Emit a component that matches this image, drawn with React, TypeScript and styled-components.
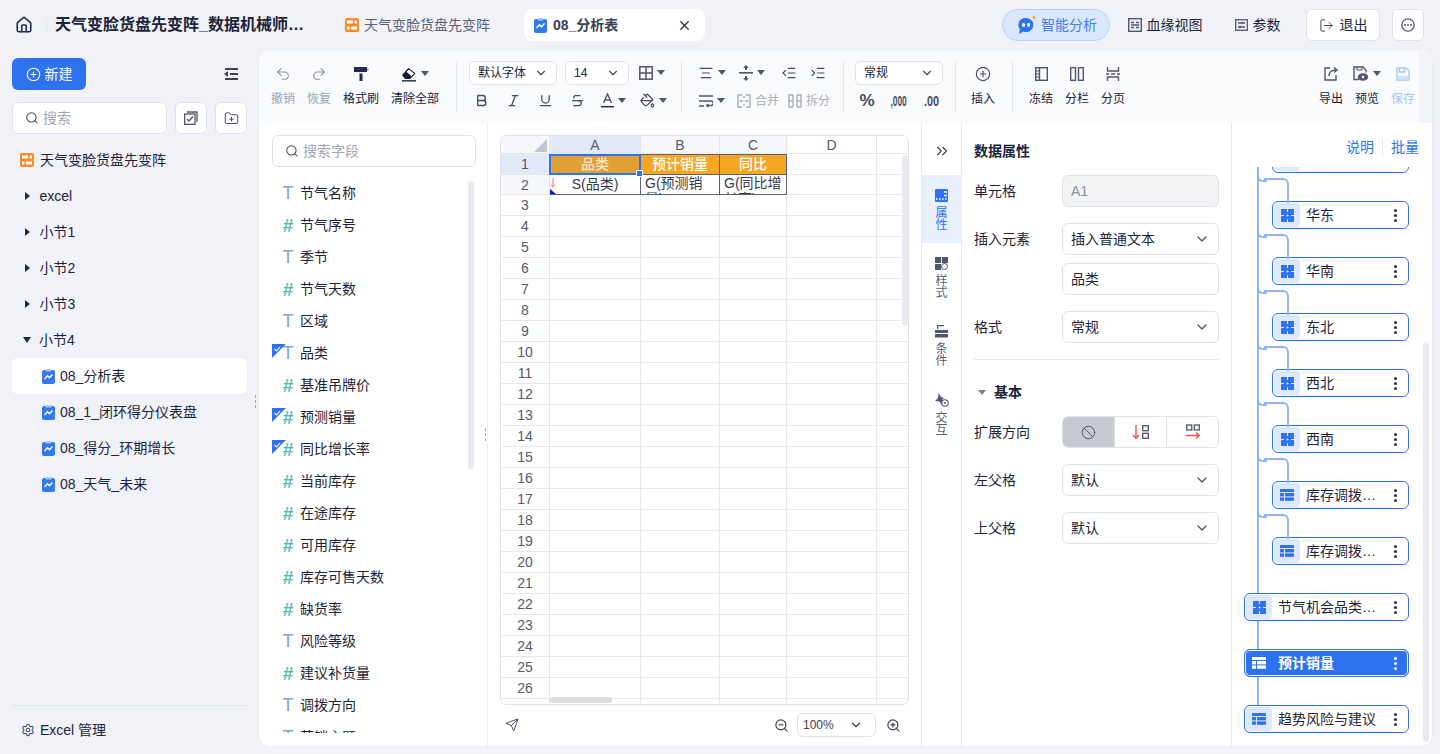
import * as React from "react";
import styled, { createGlobalStyle } from "styled-components";
import {
  AlignCenter,
  Ban,
  Bold,
  ChevronDown,
  ChevronsRight,
  CirclePlus,
  FolderPlus,
  Home,
  IndentDecrease,
  IndentIncrease,
  Italic,
  LogOut,
  PaintBucket,
  Redo2,
  Search,
  Send,
  Settings,
  Strikethrough,
  Underline,
  Undo2,
  X,
  ZoomIn,
  ZoomOut,
} from "lucide-react";

const FONT = `"Liberation Sans", "Noto Sans CJK SC", sans-serif`;
const INK = "#1d2438";
const ICON = "#454b60";
const BLUE = "#2f72f0";
const LINE = "#dfe2ea";

const GlobalStyle = createGlobalStyle`
  html, body { margin: 0; padding: 0; height: 100%; overflow: hidden; }
  body { background: #f0f2f8; font-family: ${FONT}; color: ${INK}; font-size: 14px; line-height: 20px; }
  * { box-sizing: border-box; }
`;

const Page = styled.div`
  width: 1440px;
  height: 754px;
  display: flex;
  flex-direction: column;
`;

/* ---------- header ---------- */
const Header = styled.header`
  height: 50px;
  flex: none;
  display: flex;
  align-items: center;
  padding: 0 16px 0 15px;
`;
const HomeWrap = styled.div`
  width: 32px;
  display: flex;
  color: #26304a;
  border-right: 1px solid #e6e8f0;
  height: 16px;
  align-items: center;
`;
const DocTitle = styled.div`
  width: 254px;
  margin-left: 8px;
  font-size: 16px;
  font-weight: 700;
  white-space: nowrap;
  overflow: hidden;
  text-overflow: ellipsis;
`;
const TabPlain = styled.div`
  margin-left: 36px;
  display: flex;
  align-items: center;
  gap: 5px;
  color: #5b6175;
  white-space: nowrap;
`;
const TabActive = styled.div`
  margin-left: 34px;
  width: 181px;
  height: 32px;
  background: #fff;
  border-radius: 8px;
  padding: 0 13px 0 10px;
  display: flex;
  align-items: center;
  gap: 6px;
  font-weight: 600;
  color: #3a4052;
  white-space: nowrap;
  span { flex: 1; }
`;
const HeaderRight = styled.div`
  margin-left: auto;
  display: flex;
  align-items: center;
`;
const AiPill = styled.div`
  width: 108px;
  height: 32px;
  border-radius: 16px;
  background: #d9e7ff;
  border: 1px solid #bcd3fb;
  color: #3f7ff0;
  display: flex;
  align-items: center;
  padding-left: 14px;
  gap: 4px;
`;
const HeaderLink = styled.div<{ $w: number }>`
  width: ${(p) => p.$w}px;
  display: flex;
  align-items: center;
  justify-content: center;
  gap: 5px;
  color: ${INK};
`;
const HeaderButton = styled.div<{ $w: number; $ml: number }>`
  width: ${(p) => p.$w}px;
  margin-left: ${(p) => p.$ml}px;
  height: 32px;
  background: #fff;
  border: 1px solid ${LINE};
  border-radius: 6px;
  display: flex;
  align-items: center;
  justify-content: center;
  gap: 6px;
  color: ${INK};
`;

/* ---------- body ---------- */
const Body = styled.div`
  flex: 1;
  min-height: 0;
  display: flex;
  padding-bottom: 8px;
`;

const Sidebar = styled.aside`
  width: 259px;
  flex: none;
  padding: 8px 12px 0;
  display: flex;
  flex-direction: column;
  position: relative;
`;
const SideTop = styled.div`
  display: flex;
  justify-content: space-between;
  align-items: center;
  padding-right: 9px;
`;
const NewButton = styled.div`
  width: 74px;
  height: 32px;
  background: ${BLUE};
  color: #fff;
  border-radius: 6px;
  display: flex;
  align-items: center;
  justify-content: center;
  gap: 4px;
`;
const SearchRow = styled.div`
  margin-top: 12px;
  display: flex;
  gap: 8px;
`;
const SearchBox = styled.div`
  flex: 1;
  height: 32px;
  background: #fff;
  border: 1px solid ${LINE};
  border-radius: 6px;
  display: flex;
  align-items: center;
  padding-left: 12px;
  gap: 4px;
  color: #a3a7b4;
  svg { color: ${ICON}; }
`;
const SquareButton = styled.div`
  width: 32px;
  height: 32px;
  background: #fff;
  border: 1px solid ${LINE};
  border-radius: 6px;
  display: flex;
  align-items: center;
  justify-content: center;
  color: ${ICON};
`;
const Tree = styled.div`
  margin-top: 8px;
  flex: 1;
`;
const TreeRow = styled.div<{ $active?: boolean; $indent: number; $gap?: number }>`
  height: 36px;
  display: flex;
  align-items: center;
  gap: ${(p) => p.$gap ?? 5}px;
  padding-left: ${(p) => p.$indent}px;
  border-radius: 6px;
  white-space: nowrap;
  background: ${(p) => (p.$active ? "#fff" : "transparent")};
`;
const Arrow = styled.span<{ $open?: boolean }>`
  width: 0;
  height: 0;
  ${(p) =>
    p.$open
      ? `border-left: 4.5px solid transparent; border-right: 4.5px solid transparent; border-top: 6px solid #232a3e; margin-left: -2px; margin-right: 3px;`
      : `border-top: 4.5px solid transparent; border-bottom: 4.5px solid transparent; border-left: 5.5px solid #232a3e; margin-right: 4.5px;`}
`;
const SideFooter = styled.div`
  height: 49px;
  border-top: 1px solid #e4e6ee;
  margin-bottom: -8px;
  display: flex;
  align-items: center;
  gap: 5px;
  padding-left: 9px;
  svg { color: ${ICON}; }
`;
const Grip = styled.div<{ $left: number; $top: number }>`
  position: absolute;
  left: ${(p) => p.$left}px;
  top: ${(p) => p.$top}px;
  width: 4px;
  height: 14px;
  background-image: radial-gradient(#a5a9b5 1px, transparent 1px);
  background-size: 3px 5px;
`;

const Main = styled.main`
  width: 1173px;
  flex: none;
  background: #fff;
  border-radius: 10px;
  overflow: hidden;
  display: flex;
  flex-direction: column;
  box-shadow: 0 0 2px rgba(60, 70, 110, 0.08);
`;

/* ---------- toolbar ---------- */
const Toolbar = styled.div`
  height: 73px;
  flex: none;
  background: linear-gradient(to right, #f9fafc 1160px, #f4f5f9 1160px);
  display: flex;
  align-items: center;
  padding: 0 17px 0 12px;
  font-size: 12px;
  line-height: 14px;
`;
const ToolGroup = styled.div<{ $gap?: number }>`
  display: flex;
  gap: ${(p) => p.$gap ?? 12}px;
`;
const ToolButton = styled.div<{ $w?: number; $dim?: boolean; $save?: boolean }>`
  width: ${(p) => (p.$w ? `${p.$w}px` : "auto")};
  height: 52px;
  padding-top: 1px;
  display: flex;
  flex-direction: column;
  align-items: center;
  gap: 6px;
  white-space: nowrap;
  color: ${(p) => (p.$save ? "#a9c6f8" : p.$dim ? "#a0a4af" : INK)};
  svg { color: ${(p) => (p.$save ? "#a9c6f8" : p.$dim ? "#8e929e" : ICON)}; }
`;
const ToolIcon = styled.div`
  height: 24px;
  display: flex;
  align-items: center;
  gap: 4px;
`;
const Sep = styled.div<{ $l: number; $r: number }>`
  width: 1px;
  height: 50px;
  background: #e3e5ec;
  margin: 0 ${(p) => p.$r}px 0 ${(p) => p.$l}px;
  flex: none;
`;
const Stack = styled.div<{ $w: number }>`
  width: ${(p) => p.$w}px;
  height: 52px;
  display: flex;
  flex-direction: column;
  justify-content: space-between;
`;
const ToolRow = styled.div<{ $gap?: number }>`
  height: 24px;
  display: flex;
  align-items: center;
  gap: ${(p) => p.$gap ?? 8}px;
`;
const MiniSelect = styled.div<{ $w: number }>`
  width: ${(p) => p.$w}px;
  height: 24px;
  background: #fff;
  border: 1px solid ${LINE};
  border-radius: 6px;
  display: flex;
  align-items: center;
  justify-content: space-between;
  padding: 0 8px;
  color: ${INK};
  svg { color: ${ICON}; }
`;
const Glyph = styled.div<{ $w?: number; $dim?: boolean }>`
  width: ${(p) => p.$w ?? 24}px;
  height: 24px;
  flex: none;
  display: flex;
  align-items: center;
  justify-content: center;
  gap: 4px;
  white-space: nowrap;
  color: ${(p) => (p.$dim ? "#a9adb8" : ICON)};
`;
const NumberGlyph = styled.span<{ $sx: number }>`
  font-size: 15px;
  font-weight: 700;
  color: #454b60;
  transform: scaleX(${(p) => p.$sx});
`;
const Percent = styled.span`
  font-size: 17px;
  font-weight: 700;
  color: #454b60;
`;
const Caret = styled.span`
  width: 0;
  height: 0;
  border-left: 4px solid transparent;
  border-right: 4px solid transparent;
  border-top: 5px solid #50566b;
`;
const ToolSpacer = styled.div`
  flex: 1;
`;

/* ---------- work area ---------- */
const Work = styled.div`
  flex: 1;
  min-height: 0;
  display: flex;
`;
const FieldsPanel = styled.section`
  width: 229px;
  flex: none;
  position: relative;
  border-right: 1px solid #eceef3;
  padding-top: 12px;
`;
const FieldSearch = styled(SearchBox)`
  width: 204px;
  flex: none;
  margin-left: 13px;
`;
const FieldList = styled.div`
  margin-top: 10px;
  height: 556px;
  overflow: hidden;
`;
const FieldRow = styled.div`
  height: 32px;
  display: flex;
  align-items: center;
  padding-left: 23px;
  gap: 6px;
  position: relative;
`;
const TypeMark = styled.span<{ $num: boolean }>`
  width: 12px;
  flex: none;
  text-align: center;
  font-size: ${(p) => (p.$num ? 19 : 18)}px;
  line-height: 1;
  font-weight: ${(p) => (p.$num ? 700 : 400)};
  font-family: "Liberation Sans", sans-serif;
  color: ${(p) => (p.$num ? "#55bdb0" : "#7f9fe6")};
`;
const CheckCorner = styled.svg`
  position: absolute;
  left: 13px;
  top: 7px;
`;
const VBar = styled.div<{ $l: number; $t: number; $h: number }>`
  position: absolute;
  left: ${(p) => p.$l}px;
  top: ${(p) => p.$t}px;
  width: 6px;
  height: ${(p) => p.$h}px;
  background: #eaebf0;
  border-radius: 3px;
`;

const SheetPanel = styled.section`
  width: 433px;
  flex: none;
  padding: 12px 12px 0 12px;
  display: flex;
  flex-direction: column;
`;
const SheetFrame = styled.div`
  width: 409px;
  height: 570px;
  border: 1px solid ${LINE};
  border-radius: 6px;
  overflow: hidden;
  position: relative;
`;
const SheetGrid = styled.div`
  display: grid;
  grid-template-columns: 49px 91px 79px 67px 90px 32px;
  grid-template-rows: 18px 21px 20px repeat(25, 21px);
`;
const HEAD_TONES = { sel: "#e1e9f7", used: "#f6f7fa", none: "#fff" };
const HeadCell = styled.div<{ $tone: keyof typeof HEAD_TONES }>`
  background: ${(p) => HEAD_TONES[p.$tone]};
  border-right: 1px solid #e5e7ec;
  border-bottom: 1px solid #e5e7ec;
  font-size: 14px;
  color: #555b6c;
  display: flex;
  align-items: center;
  justify-content: center;
  position: relative;
`;
const Corner = styled.span`
  position: absolute;
  right: 2px;
  bottom: 1px;
  width: 0;
  height: 0;
  border-left: 13px solid transparent;
  border-bottom: 13px solid #c3c6d2;
`;
const Cell = styled.div`
  border-right: 1px solid #e8e9ee;
  border-bottom: 1px solid #e8e9ee;
`;
const TitleCell = styled.div<{ $fill: string; $sel?: boolean }>`
  background: ${(p) => p.$fill};
  color: ${(p) => (p.$sel ? "#f6e6c8" : "#fff")};
  border: 1px solid #5c6178;
  border-left-width: ${(p) => (p.$sel ? 1 : 0)}px;
  font-weight: 500;
  text-align: center;
  line-height: 19px;
  position: relative;
  margin-left: ${(p) => (p.$sel ? -1 : 0)}px;
`;
const Selection = styled.span`
  position: absolute;
  inset: -1px;
  border: 2px solid ${BLUE};
  z-index: 2;
  &::after {
    content: "";
    position: absolute;
    right: -4px;
    bottom: -4px;
    width: 5px;
    height: 5px;
    background: ${BLUE};
    border: 1px solid #fff;
  }
`;
const DataCell = styled.div<{ $center?: boolean }>`
  border-right: 1px solid #5c6178;
  border-bottom: 1px solid #5c6178;
  line-height: ${(p) => (p.$center ? 19 : 16)}px;
  overflow: hidden;
  text-align: ${(p) => (p.$center ? "center" : "left")};
  position: relative;
  padding-left: ${(p) => (p.$center ? 0 : 4)}px;
  color: #333a4e;
  word-break: break-all;
`;
const ExpandMark = styled.svg`
  position: absolute;
  left: 0;
  top: 0;
`;
const HBar = styled.div`
  position: absolute;
  left: 49px;
  bottom: 1px;
  width: 62px;
  height: 6px;
  background: #dcdee4;
  border-radius: 3px;
`;
const SheetFooter = styled.div`
  height: 40px;
  display: flex;
  align-items: center;
  padding: 0 8px 0 5px;
  color: #3d4358;
`;
const ZoomSelect = styled.div`
  width: 79px;
  height: 24px;
  margin: 0 10px 0 8px;
  border: 1px solid ${LINE};
  border-radius: 6px;
  display: flex;
  align-items: center;
  justify-content: space-between;
  padding: 0 12px 0 5px;
  font-size: 12px;
  color: #3b4155;
`;

const SideTabs = styled.nav`
  width: 41px;
  flex: none;
  border-left: 1px solid #e8eaf0;
  border-right: 1px solid #e8eaf0;
  padding-top: 12px;
`;
const Collapse = styled.div`
  height: 40px;
  display: flex;
  align-items: flex-start;
  justify-content: center;
  padding-top: 7px;
  color: #3c4257;
`;
const SideTab = styled.div<{ $active?: boolean }>`
  height: 68px;
  display: flex;
  flex-direction: column;
  align-items: center;
  padding-top: 14px;
  background: ${(p) => (p.$active ? "#e8f0fe" : "transparent")};
  color: ${(p) => (p.$active ? BLUE : "#5a6072")};
  font-size: 12px;
  line-height: 12px;
  gap: 5px;
  span { width: 12px; text-align: center; }
`;

const PropsPanel = styled.section`
  width: 270px;
  flex: none;
  padding: 18px 12px 0 12px;
  border-right: 1px solid #e8eaf0;
`;
const PropTitle = styled.div`
  font-weight: 700;
  margin-bottom: 14px;
`;
const PropRow = styled.div`
  display: flex;
  align-items: center;
  margin-bottom: 16px;
`;
const PropLabel = styled.div`
  width: 88px;
  flex: none;
  white-space: nowrap;
`;
const Control = styled.div<{ $disabled?: boolean }>`
  flex: 1;
  height: 32px;
  border: 1px solid ${LINE};
  border-radius: 6px;
  background: ${(p) => (p.$disabled ? "#f2f3f5" : "#fff")};
  color: ${(p) => (p.$disabled ? "#8a8f9c" : INK)};
  display: flex;
  align-items: center;
  justify-content: space-between;
  padding: 0 8px;
  svg { color: ${ICON}; }
`;
const PlainControl = styled(Control)`
  margin: -8px 0 16px 88px;
`;
const Divider = styled.div`
  height: 1px;
  background: #e6e8ee;
  margin-bottom: 22px;
`;
const SectionHead = styled.div`
  display: flex;
  align-items: center;
  font-weight: 700;
  gap: 8px;
  padding-left: 4px;
  margin-bottom: 14px;
  &::before {
    content: "";
    width: 0;
    height: 0;
    border-left: 4px solid transparent;
    border-right: 4px solid transparent;
    border-top: 5px solid #7a7f8e;
  }
`;
const Segments = styled.div`
  flex: 1;
  height: 32px;
  border: 1px solid ${LINE};
  border-radius: 6px;
  overflow: hidden;
  display: flex;
`;
const Segment = styled.div<{ $on?: boolean }>`
  flex: 1;
  display: flex;
  align-items: center;
  justify-content: center;
  background: ${(p) => (p.$on ? "#c8cad1" : "#fff")};
  border-left: 1px solid ${LINE};
  color: #4c5266;
  &:first-child { border-left: 0; }
`;

const TreePanel = styled.section`
  flex: 1;
  min-width: 0;
  display: flex;
  flex-direction: column;
  position: relative;
`;
const TreeHead = styled.div`
  height: 44px;
  flex: none;
  display: flex;
  justify-content: flex-end;
  align-items: center;
  padding: 4px 13px 0 0;
  color: ${BLUE};
  gap: 8px;
  i {
    width: 1px;
    height: 16px;
    background: #e3e5ec;
  }
`;
const NodeScroll = styled.div`
  flex: 1;
  overflow: hidden;
  position: relative;
  padding-left: 12px;
  &::before {
    content: "";
    position: absolute;
    left: 25px;
    top: 0;
    height: 538px;
    width: 2px;
    background: #8fb4f8;
  }
`;
const NodeList = styled.div`
  margin-top: -22px;
  display: flex;
  flex-direction: column;
  gap: 28px;
`;
const Node = styled.div<{ $child?: boolean; $active?: boolean }>`
  height: 28px;
  width: ${(p) => (p.$child ? 137 : 165)}px;
  margin-left: ${(p) => (p.$child ? 28 : 0)}px;
  border: 1px solid ${BLUE};
  border-radius: 6px;
  padding: 1px;
  background: ${(p) => (p.$active ? BLUE : "#fff")};
  box-shadow: ${(p) => (p.$active ? "inset 0 0 0 1px #fff" : "none")};
  color: ${(p) => (p.$active ? "#fff" : INK)};
  font-weight: ${(p) => (p.$active ? 700 : 400)};
  display: flex;
  align-items: center;
  position: relative;
  z-index: 1;
  ${(p) =>
    p.$child &&
    `
    &::before {
      content: "";
      position: absolute;
      left: -9px;
      top: -24px;
      width: 23px;
      height: 23px;
      border-top: 2px solid #8fb4f8;
      border-right: 2px solid #8fb4f8;
      border-top-right-radius: 6px;
    }
    &::after {
      content: "";
      position: absolute;
      left: -16px;
      top: -30px;
      width: 8px;
      height: 8px;
      border-left: 2px solid #8fb4f8;
      border-bottom: 2px solid #8fb4f8;
      border-bottom-left-radius: 6px;
    }
  `}
`;
const NodeIcon = styled.span<{ $active?: boolean }>`
  width: 26px;
  height: 24px;
  flex: none;
  border-radius: 4px;
  background: ${(p) => (p.$active ? "transparent" : "#dbe8fd")};
  display: flex;
  align-items: center;
  justify-content: center;
`;
const NodeText = styled.span`
  margin-left: 6px;
  padding-right: 5px;
  flex: 1;
  min-width: 0;
  white-space: nowrap;
  overflow: hidden;
  text-overflow: ellipsis;
`;
const NodeMenu = styled.span`
  width: 24px;
  flex: none;
  display: flex;
  justify-content: center;
`;
const Kebab = styled.span<{ $active?: boolean }>`
  width: 3px;
  height: 3px;
  border-radius: 50%;
  background: ${(p) => (p.$active ? "#fff" : "#2b3145")};
  box-shadow: 0 -5px 0 ${(p) => (p.$active ? "#fff" : "#2b3145")}, 0 5px 0 ${(p) => (p.$active ? "#fff" : "#2b3145")};
`;

/* ---------- drawings ---------- */
const ReportIcon = () => (
  <svg width="14" height="14" viewBox="0 0 14 14">
    <rect width="14" height="14" rx="2" fill="#f98b2a" />
    <rect x="2" y="2.5" width="6" height="3" fill="#fff" />
    <rect x="9.5" y="2.5" width="2.5" height="3" fill="#fff" />
    <rect x="2" y="8.5" width="2.5" height="3" fill="#fff" />
    <rect x="6" y="8.5" width="6" height="3" fill="#fff" />
  </svg>
);
const ChartDoc = () => (
  <svg width="13" height="15" viewBox="0 0 13 15">
    <rect y="1" width="13" height="14" rx="2" fill="#3478f0" />
    <rect x="3.5" y="0" width="6" height="2.4" rx="1" fill="#a9c8fb" />
    <path d="M2.5 10l3-3.2 2 2 3-3.2" fill="none" stroke="#fff" strokeWidth="1.4" />
  </svg>
);
const BotIcon = () => (
  <svg width="20" height="20" viewBox="0 0 20 20">
    <path d="M9 3a7.5 7 0 1 1-2.8 13.5L2 19l.8-4.8A7 7 0 0 1 9 3z" fill="#2f72f0" />
    <ellipse cx="6.5" cy="10" rx="1.6" ry="2" fill="#fff" />
    <ellipse cx="11.5" cy="10" rx="1.6" ry="2" fill="#fff" />
    <path d="M17 0l.7 1.8L19.5 2.5l-1.8.7L17 5l-.7-1.8L14.5 2.5l1.8-.7z" fill="#f5a623" />
  </svg>
);
const BoardIcon = () => (
  <svg width="14" height="14" viewBox="0 0 14 14" fill="none" stroke="#50566b">
    <rect x="0.7" y="0.7" width="12.6" height="12.6" strokeWidth="1.4" />
    <path d="M3 4.5h3M3 9.5h3M8 4.5h3M8 9.5h3M3 7h8" strokeWidth="1.4" />
  </svg>
);
const ParamIcon = () => (
  <svg width="13" height="12" viewBox="0 0 13 12" fill="none" stroke="#50566b" strokeWidth="1.3">
    <rect x="0.7" y="0.7" width="11.6" height="10.6" />
    <path d="M3 4h7M3 8h7" />
    <path d="M7 2.8v2.4M5 6.8v2.4" />
  </svg>
);
const MoreIcon = () => (
  <svg width="14" height="14" viewBox="0 0 14 14">
    <circle cx="7" cy="7" r="6.2" fill="none" stroke="#50566b" strokeWidth="1.3" />
    <circle cx="4" cy="7" r="1" fill="#50566b" />
    <circle cx="7" cy="7" r="1" fill="#50566b" />
    <circle cx="10" cy="7" r="1" fill="#50566b" />
  </svg>
);
const CollapseIcon = () => (
  <svg width="14" height="12" viewBox="0 0 14 12" fill="#3a4055">
    <rect x="1" width="13" height="2" />
    <rect x="6" y="5" width="8" height="2" />
    <rect x="1" y="10" width="13" height="2" />
    <path d="M0 6l4-3v6z" />
  </svg>
);
const CheckStack = () => (
  <svg width="14" height="14" viewBox="0 0 14 14" fill="none" stroke="#50566b" strokeWidth="1.3">
    <rect x="0.7" y="3" width="10.3" height="10.3" />
    <path d="M3 8l2 2 4-4.5" />
    <path d="M3 1h10v10" />
  </svg>
);
const RollerIcon = () => (
  <svg width="16" height="16" viewBox="0 0 16 16" fill="#1f2a5a">
    <rect x="1" y="1" width="13" height="5" rx="0.6" />
    <rect x="14" y="2.5" width="1.5" height="2" fill="#8c90a0" />
    <path d="M6.5 7.5h3V15h-3z" />
  </svg>
);
const EraserIcon = () => (
  <svg width="16" height="16" viewBox="0 0 16 16">
    <path d="M1 9l6.5-7 7 5.5L9 13H4z" fill="#171c2c" />
    <path d="M8 3l5.5 4.4-3 3.2L5 6z" fill="#fff" stroke="#171c2c" strokeWidth="1" />
    <rect x="1" y="14.2" width="14" height="1.3" fill="#171c2c" />
  </svg>
);
const ValignIcon = () => (
  <svg width="14" height="16" viewBox="0 0 14 16" fill="#50566b">
    <rect y="7" width="14" height="1.6" />
    <path d="M7 0l3 3H8v2H6V3H4zM7 16l3-3H8v-2H6v2H4z" />
  </svg>
);
const WrapIcon = () => (
  <svg width="14" height="14" viewBox="0 0 14 14" fill="none" stroke="#50566b" strokeWidth="1.4">
    <path d="M0 2h14M0 7h12a2 2 0 0 1 0 4.5H8" />
    <path d="M0 12h5" />
    <path d="M9.5 10l-2 1.5 2 1.5" />
  </svg>
);
const TableBorders = () => (
  <svg width="14" height="14" viewBox="0 0 14 14" fill="none" stroke="#50566b" strokeWidth="1.5">
    <rect x="0.8" y="0.8" width="12.4" height="12.4" />
    <path d="M7 1v12M1 7h12" />
  </svg>
);
const MergeIcon = ({ split }: { split?: boolean }) => (
  <svg width="14" height="14" viewBox="0 0 14 14" fill="none" stroke="#a9adb8" strokeWidth="1.4">
    <path d="M5 1H1v12h4M9 1h4v12H9" />
    {split ? <path d="M5 1v12M9 1v12M1 7h3M10 7h3" /> : <path d="M2.5 7H6M11.5 7H8M7 2v2M7 10v2" />}
  </svg>
);
const FontColor = () => (
  <svg width="13" height="15" viewBox="0 0 13 15" fill="none" stroke="#50566b" strokeWidth="1.4">
    <path d="M2.5 10L6.5 1l4 9M4 7h5" />
    <rect x="0" y="13" width="13" height="1.4" fill="#1b2350" stroke="none" />
  </svg>
);
const FreezeIcon = () => (
  <svg width="13" height="14" viewBox="0 0 13 14" fill="none" stroke="#50566b" strokeWidth="1.4">
    <rect x="0.7" y="0.7" width="11.6" height="12.6" />
    <path d="M4.5 1v12" />
    <path d="M1 4h3M1 7h3M1 10h3" strokeWidth="1" />
  </svg>
);
const ColumnsIcon = () => (
  <svg width="14" height="14" viewBox="0 0 14 14" fill="none" stroke="#50566b" strokeWidth="1.4">
    <rect x="0.7" y="0.7" width="4.8" height="12.6" />
    <rect x="8.5" y="0.7" width="4.8" height="12.6" />
  </svg>
);
const PagesIcon = () => (
  <svg width="14" height="14" viewBox="0 0 14 14" fill="none" stroke="#50566b" strokeWidth="1.4">
    <path d="M1.5 0v4h11V0M1.5 14v-4h11v4M0 7h3M5 7h4M11 7h3" />
  </svg>
);
const ExportIcon = () => (
  <svg width="15" height="15" viewBox="0 0 15 15" fill="none" stroke="#50566b" strokeWidth="1.4">
    <path d="M6 2H1v12h11V9" />
    <path d="M5 10c0-4 3-6 7-6M10 1.5L13 4l-3 2.5" />
  </svg>
);
const PreviewIcon = () => (
  <svg width="16" height="15" viewBox="0 0 16 15" fill="none" stroke="#50566b" strokeWidth="1.4">
    <path d="M6 13.5H1V1h9l3 3v2.5" />
    <path d="M4 1v3h5V1" strokeWidth="1" />
    <ellipse cx="10" cy="11" rx="4.5" ry="3" fill="#50566b" />
    <circle cx="10" cy="11" r="1.2" fill="#fff" stroke="none" />
  </svg>
);
const SaveIcon = () => (
  <svg width="14" height="14" viewBox="0 0 14 14" fill="none" stroke="#a9c6f8" strokeWidth="1.4">
    <path d="M1 1h9l3 3v9H1z" />
    <path d="M3.5 1v4h5V1" />
    <rect x="1.5" y="9" width="11" height="3.5" fill="#cfe0fb" stroke="none" />
  </svg>
);
const AttrIcon = () => (
  <svg width="13" height="13" viewBox="0 0 13 13">
    <rect width="13" height="13" rx="1" fill="#2f72f0" />
    <path d="M9 3h3M9 6.5h3M1 10h1.5M4 10h1.5M7 10h1.5M10 10h1.5" stroke="#fff" strokeWidth="1.3" />
  </svg>
);
const StyleIcon = () => (
  <svg width="13" height="13" viewBox="0 0 13 13" fill="#50566b">
    <rect width="6" height="6" />
    <rect x="7" width="6" height="6" />
    <rect y="7" width="6" height="6" />
    <circle cx="9.5" cy="9.5" r="3" fill="#fff" stroke="#50566b" strokeWidth="1" />
  </svg>
);
const RuleIcon = () => (
  <svg width="13" height="13" viewBox="0 0 13 13" fill="#50566b">
    <path d="M2 0h7v1.2H3.2V4H2z" />
    <rect y="5" width="13" height="3" />
    <rect y="9" width="13" height="3.5" rx="0.6" />
  </svg>
);
const TouchIcon = () => (
  <svg width="14" height="14" viewBox="0 0 14 14" fill="#50566b">
    <path d="M3.5 0L6 4l3 1-2 2v5L4.5 8.5 0 8l3-3z" />
    <circle cx="10" cy="10" r="3.2" fill="#fff" stroke="#50566b" strokeWidth="1.1" />
    <circle cx="10" cy="10" r="1" />
  </svg>
);
const ExpandDown = () => (
  <svg width="18" height="16" viewBox="0 0 18 16" fill="none" strokeWidth="1.4">
    <path d="M4 1v13M1 11l3 3.4L7 11" stroke="#ef5350" />
    <rect x="10.7" y="1.7" width="5.6" height="5" stroke="#5a6072" />
    <rect x="10.7" y="9.3" width="5.6" height="5" stroke="#5a6072" />
  </svg>
);
const ExpandRight = () => (
  <svg width="16" height="16" viewBox="0 0 16 16" fill="none" strokeWidth="1.4">
    <rect x="1.7" y="1" width="5" height="5" stroke="#5a6072" />
    <rect x="9.3" y="1" width="5" height="5" stroke="#5a6072" />
    <path d="M1 11.5h13M11 8.5l3.3 3-3.3 3" stroke="#ef5350" />
  </svg>
);
const PuzzleIcon = () => (
  <svg width="13" height="13" viewBox="0 0 13 13">
    <rect width="13" height="13" fill="#2f72f0" />
    <path d="M6.5 0v3M6.5 5.5v2M6.5 10v3M0 6.5h3M5.5 6.5h2M10 6.5h3" stroke="#dbe8fd" strokeWidth="1.1" />
  </svg>
);
const TableIcon = ({ active }: { active?: boolean }) => (
  <svg width="14" height="12" viewBox="0 0 14 12" fill={active ? "#fff" : "#2f72f0"}>
    <rect width="14" height="3" rx="0.6" />
    <rect y="4" width="4" height="3.4" />
    <rect x="5" y="4" width="9" height="3.4" />
    <rect y="8.4" width="4" height="3.4" />
    <rect x="5" y="8.4" width="9" height="3.4" />
  </svg>
);

/* ---------- data ---------- */
const FIELDS: [string, "T" | "#", boolean?][] = [
  ["节气名称", "T"],
  ["节气序号", "#"],
  ["季节", "T"],
  ["节气天数", "#"],
  ["区域", "T"],
  ["品类", "T", true],
  ["基准吊牌价", "#"],
  ["预测销量", "#", true],
  ["同比增长率", "#", true],
  ["当前库存", "#"],
  ["在途库存", "#"],
  ["可用库存", "#"],
  ["库存可售天数", "#"],
  ["缺货率", "#"],
  ["风险等级", "T"],
  ["建议补货量", "#"],
  ["调拨方向", "T"],
  ["营销主题", "T"],
];

const NODES: { text: string; kind: "p" | "t"; child?: boolean; active?: boolean }[] = [
  { text: "华北", kind: "p", child: true },
  { text: "华东", kind: "p", child: true },
  { text: "华南", kind: "p", child: true },
  { text: "东北", kind: "p", child: true },
  { text: "西北", kind: "p", child: true },
  { text: "西南", kind: "p", child: true },
  { text: "库存调拨建议表", kind: "t", child: true },
  { text: "库存调拨明细表", kind: "t", child: true },
  { text: "节气机会品类分析表", kind: "p" },
  { text: "预计销量", kind: "t", active: true },
  { text: "趋势风险与建议", kind: "t" },
];

const ROWS = Array.from({ length: 27 }, (_, i) => i + 1);

function Fields() {
  return (
    <FieldList>
      {FIELDS.map(([name, type, checked]) => (
        <FieldRow key={name}>
          {checked && (
            <CheckCorner width="14" height="14" viewBox="0 0 14 14">
              <path d="M0 0h14L0 14z" fill="#2f72f0" />
              <path d="M2.5 5l2 2 3.5-4" fill="none" stroke="#fff" strokeWidth="1.1" />
            </CheckCorner>
          )}
          <TypeMark $num={type === "#"}>{type}</TypeMark>
          {name}
        </FieldRow>
      ))}
    </FieldList>
  );
}

function Sheet() {
  return (
    <SheetFrame>
      <SheetGrid>
        <HeadCell $tone="used">
          <Corner />
        </HeadCell>
        <HeadCell $tone="sel">A</HeadCell>
        <HeadCell $tone="used">B</HeadCell>
        <HeadCell $tone="used">C</HeadCell>
        <HeadCell $tone="none">D</HeadCell>
        <HeadCell $tone="none" />
        {ROWS.map((row) => (
          <React.Fragment key={row}>
            <HeadCell $tone={row === 1 ? "sel" : row === 2 ? "used" : "none"}>{row < 27 ? row : ""}</HeadCell>
            {row === 1 && (
              <>
                <TitleCell $fill="#e0a035" $sel>
                  品类
                  <Selection />
                </TitleCell>
                <TitleCell $fill="#f5a623">预计销量</TitleCell>
                <TitleCell $fill="#f5a623">同比</TitleCell>
              </>
            )}
            {row === 2 && (
              <>
                <DataCell $center>
                  <ExpandMark width="10" height="20" viewBox="0 0 10 20">
                    <path d="M3 3v9M1 9.5L3 12l2-2.5" fill="none" stroke="#f36b6b" />
                    <path d="M0 14l6 5H0z" fill="#0b18d8" />
                  </ExpandMark>
                  S(品类)
                </DataCell>
                <DataCell>G(预测销量)</DataCell>
                <DataCell>G(同比增长率)</DataCell>
              </>
            )}
            {row > 2 && (
              <>
                <Cell />
                <Cell />
                <Cell />
              </>
            )}
            <Cell />
            <Cell />
          </React.Fragment>
        ))}
      </SheetGrid>
      <VBar $l={401} $t={19} $h={170} />
      <HBar />
    </SheetFrame>
  );
}

export default function App() {
  return (
    <Page>
      <GlobalStyle />
      <Header>
        <HomeWrap>
          <Home size={18} strokeWidth={2.2} />
        </HomeWrap>
        <DocTitle>天气变脸货盘先变阵_数据机械师出品版</DocTitle>
        <TabPlain>
          <ReportIcon />
          天气变脸货盘先变阵
        </TabPlain>
        <TabActive>
          <ChartDoc />
          <span>08_分析表</span>
          <X size={15} strokeWidth={2} color="#2b3145" />
        </TabActive>
        <HeaderRight>
          <AiPill>
            <BotIcon />
            智能分析
          </AiPill>
          <HeaderLink $w={110}>
            <BoardIcon />
            血缘视图
          </HeaderLink>
          <HeaderLink $w={75}>
            <ParamIcon />
            参数
          </HeaderLink>
          <HeaderButton $w={74} $ml={11}>
            <LogOut size={15} strokeWidth={1.6} color="#454b60" />
            退出
          </HeaderButton>
          <HeaderButton $w={32} $ml={12}>
            <MoreIcon />
          </HeaderButton>
        </HeaderRight>
      </Header>
      <Body>
        <Sidebar>
          <SideTop>
            <NewButton>
              <CirclePlus size={15} strokeWidth={1.8} />
              新建
            </NewButton>
            <CollapseIcon />
          </SideTop>
          <SearchRow>
            <SearchBox>
              <Search size={14} strokeWidth={1.8} />
              搜索
            </SearchBox>
            <SquareButton>
              <CheckStack />
            </SquareButton>
            <SquareButton>
              <FolderPlus size={15} strokeWidth={1.6} />
            </SquareButton>
          </SearchRow>
          <Tree>
            <TreeRow $indent={8} $gap={6}>
              <ReportIcon />
              天气变脸货盘先变阵
            </TreeRow>
            {["excel", "小节1", "小节2", "小节3"].map((t) => (
              <TreeRow key={t} $indent={13}>
                <Arrow />
                {t}
              </TreeRow>
            ))}
            <TreeRow $indent={13}>
              <Arrow $open />
              小节4
            </TreeRow>
            {["08_分析表", "08_1_闭环得分仪表盘", "08_得分_环期增长", "08_天气_未来"].map((t, i) => (
              <TreeRow key={t} $indent={30} $active={i === 0}>
                <ChartDoc />
                <span>{t}</span>
              </TreeRow>
            ))}
          </Tree>
          <SideFooter>
            <Settings size={14} strokeWidth={1.8} />
            Excel 管理
          </SideFooter>
          <Grip $left={254} $top={344} />
        </Sidebar>
        <Main>
          <Toolbar>
            <ToolGroup>
              <ToolButton $dim>
                <ToolIcon>
                  <Undo2 size={16} strokeWidth={1.6} />
                </ToolIcon>
                撤销
              </ToolButton>
              <ToolButton $dim>
                <ToolIcon>
                  <Redo2 size={16} strokeWidth={1.6} />
                </ToolIcon>
                恢复
              </ToolButton>
              <ToolButton>
                <ToolIcon>
                  <RollerIcon />
                </ToolIcon>
                格式刷
              </ToolButton>
              <ToolButton>
                <ToolIcon>
                  <EraserIcon />
                  <Caret />
                </ToolIcon>
                清除全部
              </ToolButton>
            </ToolGroup>
            <Sep $l={17} $r={12} />
            <Stack $w={199}>
              <ToolRow>
                <MiniSelect $w={88}>
                  默认字体
                  <ChevronDown size={14} />
                </MiniSelect>
                <MiniSelect $w={64}>
                  14
                  <ChevronDown size={14} />
                </MiniSelect>
                <Glyph $w={30}>
                  <TableBorders />
                  <Caret />
                </Glyph>
              </ToolRow>
              <ToolRow>
                <Glyph>
                  <Bold size={15} strokeWidth={2.2} />
                </Glyph>
                <Glyph>
                  <Italic size={15} strokeWidth={2} />
                </Glyph>
                <Glyph>
                  <Underline size={15} strokeWidth={2} />
                </Glyph>
                <Glyph>
                  <Strikethrough size={15} strokeWidth={2} />
                </Glyph>
                <Glyph $w={32}>
                  <FontColor />
                  <Caret />
                </Glyph>
                <Glyph $w={32}>
                  <PaintBucket size={15} strokeWidth={2} />
                  <Caret />
                </Glyph>
              </ToolRow>
            </Stack>
            <Sep $l={13} $r={14} />
            <Stack $w={134}>
              <ToolRow>
                <Glyph $w={32}>
                  <AlignCenter size={16} strokeWidth={1.8} />
                  <Caret />
                </Glyph>
                <Glyph $w={32}>
                  <ValignIcon />
                  <Caret />
                </Glyph>
                <Glyph $w={26}>
                  <IndentDecrease size={16} strokeWidth={1.8} />
                </Glyph>
                <Glyph $w={16}>
                  <IndentIncrease size={16} strokeWidth={1.8} />
                </Glyph>
              </ToolRow>
              <ToolRow $gap={9}>
                <Glyph $w={32}>
                  <WrapIcon />
                  <Caret />
                </Glyph>
                <Glyph $w={42} $dim>
                  <MergeIcon />
                  合并
                </Glyph>
                <Glyph $w={42} $dim>
                  <MergeIcon split />
                  拆分
                </Glyph>
              </ToolRow>
            </Stack>
            <Sep $l={13} $r={11} />
            <Stack $w={88}>
              <ToolRow>
                <MiniSelect $w={88}>
                  常规
                  <ChevronDown size={14} />
                </MiniSelect>
              </ToolRow>
              <ToolRow>
                <Glyph>
                  <Percent>%</Percent>
                </Glyph>
                <Glyph>
                  <NumberGlyph $sx={0.56}>,000</NumberGlyph>
                </Glyph>
                <Glyph>
                  <NumberGlyph $sx={0.72}>.00</NumberGlyph>
                </Glyph>
              </ToolRow>
            </Stack>
            <Sep $l={12} $r={15} />
            <ToolButton>
              <ToolIcon>
                <CirclePlus size={16} strokeWidth={1.7} />
              </ToolIcon>
              插入
            </ToolButton>
            <Sep $l={17} $r={16} />
            <ToolGroup $gap={12}>
              <ToolButton $w={24}>
                <ToolIcon>
                  <FreezeIcon />
                </ToolIcon>
                冻结
              </ToolButton>
              <ToolButton $w={24}>
                <ToolIcon>
                  <ColumnsIcon />
                </ToolIcon>
                分栏
              </ToolButton>
              <ToolButton $w={24}>
                <ToolIcon>
                  <PagesIcon />
                </ToolIcon>
                分页
              </ToolButton>
            </ToolGroup>
            <ToolSpacer />
            <ToolGroup $gap={12}>
              <ToolButton $w={24}>
                <ToolIcon>
                  <ExportIcon />
                </ToolIcon>
                导出
              </ToolButton>
              <ToolButton $w={24}>
                <ToolIcon>
                  <PreviewIcon />
                  <Caret />
                </ToolIcon>
                预览
              </ToolButton>
              <ToolButton $w={24} $save>
                <ToolIcon>
                  <SaveIcon />
                </ToolIcon>
                保存
              </ToolButton>
            </ToolGroup>
          </Toolbar>
          <Work>
            <FieldsPanel>
              <FieldSearch>
                <Search size={14} strokeWidth={1.8} />
                搜索字段
              </FieldSearch>
              <Fields />
              <VBar $l={209} $t={58} $h={288} />
              <Grip $left={225} $top={304} />
            </FieldsPanel>
            <SheetPanel>
              <Sheet />
              <SheetFooter>
                <Send size={14} strokeWidth={1.6} />
                <ToolSpacer />
                <ZoomOut size={15} strokeWidth={2} />
                <ZoomSelect>
                  100%
                  <ChevronDown size={14} />
                </ZoomSelect>
                <ZoomIn size={15} strokeWidth={2} />
              </SheetFooter>
            </SheetPanel>
            <SideTabs>
              <Collapse>
                <ChevronsRight size={18} strokeWidth={1.6} />
              </Collapse>
              <SideTab $active>
                <AttrIcon />
                <span>属性</span>
              </SideTab>
              <SideTab>
                <StyleIcon />
                <span>样式</span>
              </SideTab>
              <SideTab>
                <RuleIcon />
                <span>条件</span>
              </SideTab>
              <SideTab>
                <TouchIcon />
                <span>交互</span>
              </SideTab>
            </SideTabs>
            <PropsPanel>
              <PropTitle>数据属性</PropTitle>
              <PropRow>
                <PropLabel>单元格</PropLabel>
                <Control $disabled>A1</Control>
              </PropRow>
              <PropRow>
                <PropLabel>插入元素</PropLabel>
                <Control>
                  插入普通文本
                  <ChevronDown size={16} strokeWidth={1.8} />
                </Control>
              </PropRow>
              <PlainControl>品类</PlainControl>
              <PropRow>
                <PropLabel>格式</PropLabel>
                <Control>
                  常规
                  <ChevronDown size={16} strokeWidth={1.8} />
                </Control>
              </PropRow>
              <Divider />
              <SectionHead>基本</SectionHead>
              <PropRow>
                <PropLabel>扩展方向</PropLabel>
                <Segments>
                  <Segment $on>
                    <Ban size={15} strokeWidth={1.5} />
                  </Segment>
                  <Segment>
                    <ExpandDown />
                  </Segment>
                  <Segment>
                    <ExpandRight />
                  </Segment>
                </Segments>
              </PropRow>
              <PropRow>
                <PropLabel>左父格</PropLabel>
                <Control>
                  默认
                  <ChevronDown size={16} strokeWidth={1.8} />
                </Control>
              </PropRow>
              <PropRow>
                <PropLabel>上父格</PropLabel>
                <Control>
                  默认
                  <ChevronDown size={16} strokeWidth={1.8} />
                </Control>
              </PropRow>
            </PropsPanel>
            <TreePanel>
              <TreeHead>
                说明
                <i />
                批量
              </TreeHead>
              <NodeScroll>
                <NodeList>
                  {NODES.map((n) => (
                    <Node key={n.text} $child={n.child} $active={n.active}>
                      <NodeIcon $active={n.active}>
                        {n.kind === "p" ? <PuzzleIcon /> : <TableIcon active={n.active} />}
                      </NodeIcon>
                      <NodeText>{n.text}</NodeText>
                      <NodeMenu>
                        <Kebab $active={n.active} />
                      </NodeMenu>
                    </Node>
                  ))}
                </NodeList>
              </NodeScroll>
              <VBar $l={191} $t={219} $h={400} />
            </TreePanel>
          </Work>
        </Main>
      </Body>
    </Page>
  );
}
